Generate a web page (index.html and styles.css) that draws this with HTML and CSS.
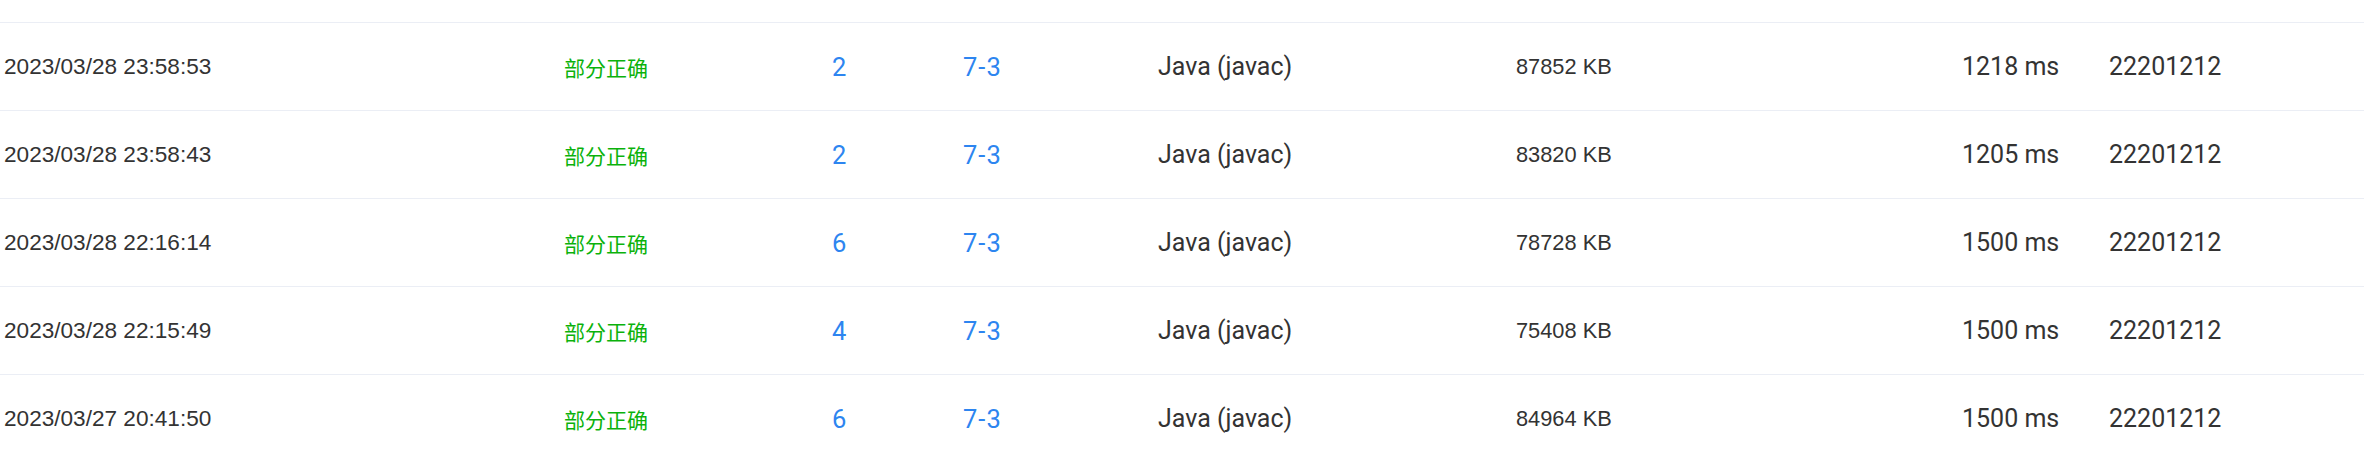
FILE: index.html
```html
<!DOCTYPE html>
<html lang="zh-CN">
<head>
<meta charset="utf-8">
<title>提交列表</title>
<link rel="stylesheet" href="styles.css">
</head>
<body>
<div class="table">
  <div class="row-tail"></div>
  <div class="row">
    <div class="c-date">2023/03/28 23:58:53</div>
    <div class="c-status">部分正确</div>
    <div class="c-score">2</div>
    <div class="c-prob">7-3</div>
    <div class="c-lang">Java (javac)</div>
    <div class="c-mem">87852 KB</div>
    <div class="c-time">1218 ms</div>
    <div class="c-user">22201212</div>
  </div>
  <div class="row">
    <div class="c-date">2023/03/28 23:58:43</div>
    <div class="c-status">部分正确</div>
    <div class="c-score">2</div>
    <div class="c-prob">7-3</div>
    <div class="c-lang">Java (javac)</div>
    <div class="c-mem">83820 KB</div>
    <div class="c-time">1205 ms</div>
    <div class="c-user">22201212</div>
  </div>
  <div class="row">
    <div class="c-date">2023/03/28 22:16:14</div>
    <div class="c-status">部分正确</div>
    <div class="c-score">6</div>
    <div class="c-prob">7-3</div>
    <div class="c-lang">Java (javac)</div>
    <div class="c-mem">78728 KB</div>
    <div class="c-time">1500 ms</div>
    <div class="c-user">22201212</div>
  </div>
  <div class="row">
    <div class="c-date">2023/03/28 22:15:49</div>
    <div class="c-status">部分正确</div>
    <div class="c-score">4</div>
    <div class="c-prob">7-3</div>
    <div class="c-lang">Java (javac)</div>
    <div class="c-mem">75408 KB</div>
    <div class="c-time">1500 ms</div>
    <div class="c-user">22201212</div>
  </div>
  <div class="row">
    <div class="c-date">2023/03/27 20:41:50</div>
    <div class="c-status">部分正确</div>
    <div class="c-score">6</div>
    <div class="c-prob">7-3</div>
    <div class="c-lang">Java (javac)</div>
    <div class="c-mem">84964 KB</div>
    <div class="c-time">1500 ms</div>
    <div class="c-user">22201212</div>
  </div>
</div>
</body>
</html>
```
FILE: styles.css
```css
html, body {
  margin: 0;
  padding: 0;
  background: #ffffff;
  overflow: hidden;
}

.table {
  width: 2364px;
  font-family: Roboto, "Noto Sans CJK SC", sans-serif;
  color: #333333;
}

.row-tail {
  height: 22px;
}

.row {
  display: grid;
  grid-template-columns: 564px 268px 131px 195px 358px 446px 147px 1fr;
  align-items: center;
  height: 87px;
  border-top: 1px solid #ebeef5;
}

.c-date {
  padding-left: 4px;
  font-family: "Liberation Sans", Arial, sans-serif;
  font-size: 22.6px;
  color: #333333;
}

.c-status {
  font-family: "Noto Sans CJK SC", sans-serif;
  font-size: 21px;
  color: #0bb20b;
}

.c-score,
.c-prob {
  font-size: 25.5px;
  color: #2d85f0;
}

.c-prob {
  word-spacing: 0;
  letter-spacing: 1px;
}

.c-lang,
.c-time,
.c-user {
  font-size: 25px;
  color: #333333;
}

.c-mem {
  font-family: "Liberation Sans", Arial, sans-serif;
  font-size: 21.8px;
  color: #333333;
}
```
